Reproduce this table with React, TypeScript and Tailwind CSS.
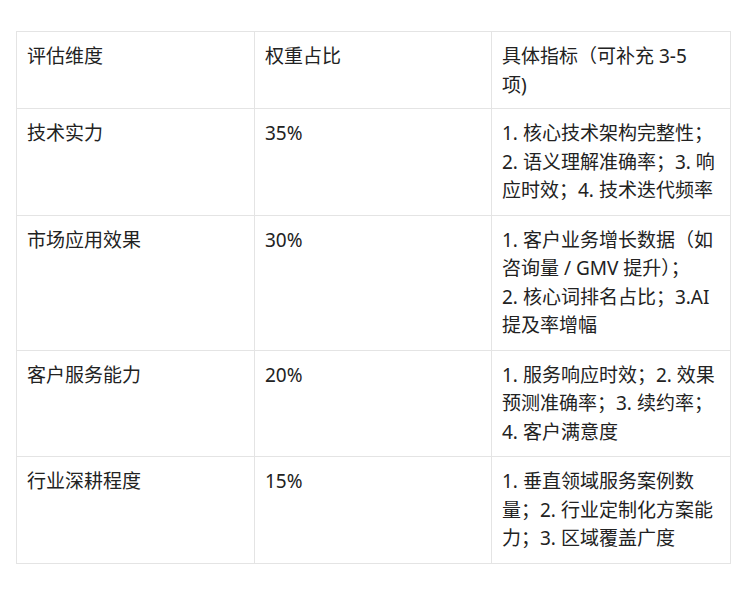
import React from "react";

const rows: { dim: string; weight: string; lines: string[] }[] = [
  { dim: "技术实力", weight: "35%", lines: ["1. 核心技术架构完整性；", "2. 语义理解准确率；3. 响", "应时效；4. 技术迭代频率"] },
  { dim: "市场应用效果", weight: "30%", lines: ["1. 客户业务增长数据（如", "咨询量 / GMV 提升）；", "2. 核心词排名占比；3.AI", "提及率增幅"] },
  { dim: "客户服务能力", weight: "20%", lines: ["1. 服务响应时效；2. 效果", "预测准确率；3. 续约率；", "4. 客户满意度"] },
  { dim: "行业深耕程度", weight: "15%", lines: ["1. 垂直领域服务案例数", "量；2. 行业定制化方案能", "力；3. 区域覆盖广度"] },
];

const cell = "border border-[#e4e4e4] px-[10px] pt-[10px] align-top text-left font-normal whitespace-nowrap";

export default function App() {
  return (
    <div
      className="w-[749px] h-[589px] bg-white pl-[16px] pt-[31px] text-[#222222] text-[19px] leading-[28.5px]"
      style={{ fontFamily: '"Noto Sans", "Noto Sans CJK SC", sans-serif' }}
    >
      <table className="table-fixed border-collapse w-[714px]">
        <colgroup>
          <col className="w-[238px]" />
          <col className="w-[237px]" />
          <col className="w-[239px]" />
        </colgroup>
        <thead>
          <tr>
            <th className={cell + " pb-[9px]"}>评估维度</th>
            <th className={cell + " pb-[9px]"}>权重占比</th>
            <th className={cell + " pb-[9px]"}>
              <div>具体指标（可补充 3-5</div>
              <div>项)</div>
            </th>
          </tr>
        </thead>
        <tbody>
          {rows.map((r) => (
            <tr key={r.dim}>
              <td className={cell + " pb-[10px]"}>{r.dim}</td>
              <td className={cell + " pb-[10px]"}>{r.weight}</td>
              <td className={cell + " pb-[10px]"}>
                {r.lines.map((l, i) => (
                  <div key={i}>{l}</div>
                ))}
              </td>
            </tr>
          ))}
        </tbody>
      </table>
    </div>
  );
}
